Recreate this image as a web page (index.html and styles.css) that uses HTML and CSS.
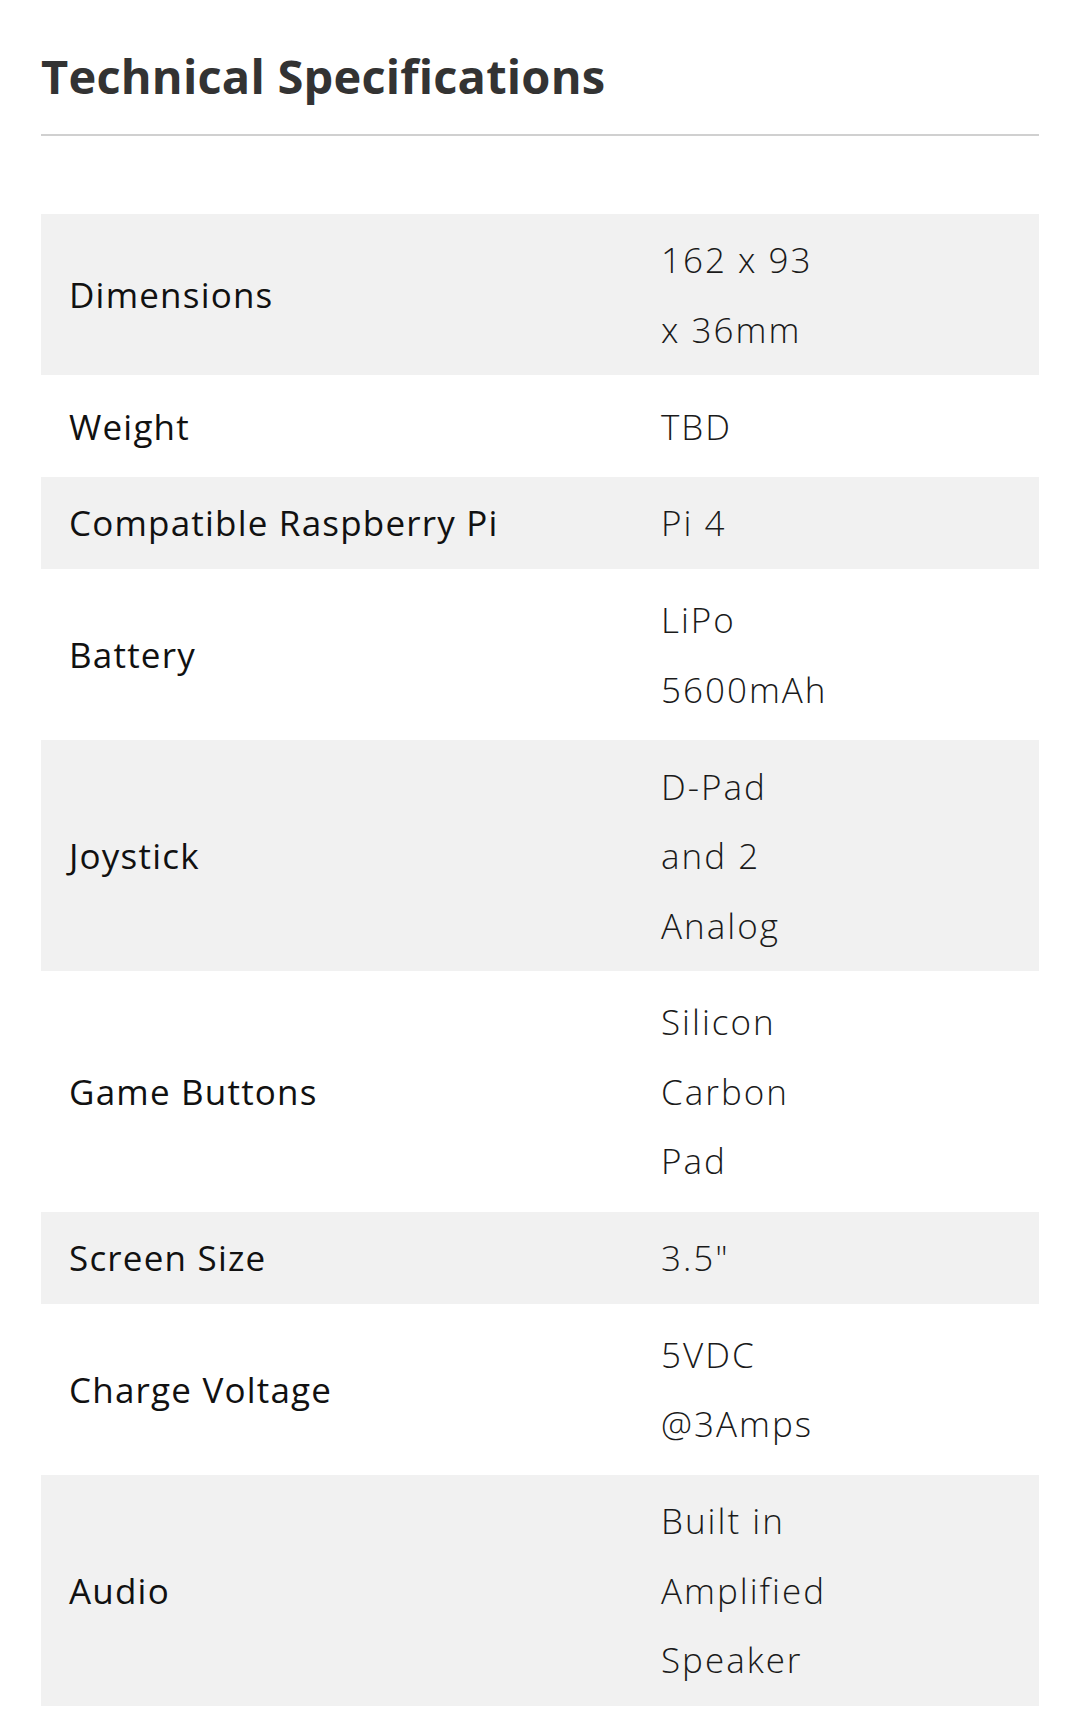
FILE: index.html
```html
<!DOCTYPE html>
<html lang="en">
<head>
<meta charset="utf-8">
<title>Technical Specifications</title>
<link rel="stylesheet" href="styles.css">
</head>
<body>
<section class="specs">
  <h2 class="specs-title">Technical Specifications</h2>
  <table class="spec-table">
    <tbody>
      <tr class="row-shaded"><th>Dimensions</th><td>162 x 93<br>x 36mm</td></tr>
      <tr><th>Weight</th><td>TBD</td></tr>
      <tr class="row-shaded"><th>Compatible Raspberry Pi</th><td>Pi 4</td></tr>
      <tr><th>Battery</th><td>LiPo<br>5600mAh</td></tr>
      <tr class="row-shaded"><th>Joystick</th><td>D-Pad<br>and 2<br>Analog</td></tr>
      <tr><th>Game Buttons</th><td>Silicon<br>Carbon<br>Pad</td></tr>
      <tr class="row-shaded"><th>Screen Size</th><td>3.5"</td></tr>
      <tr><th>Charge Voltage</th><td>5VDC<br>@3Amps</td></tr>
      <tr class="row-shaded"><th>Audio</th><td>Built in<br>Amplified<br>Speaker</td></tr>
    </tbody>
  </table>
</section>
</body>
</html>
```
FILE: styles.css
```css
html, body {
  margin: 0;
  padding: 0;
  background: #ffffff;
}

body {
  font-family: "Open Sans", "Noto Sans", "DejaVu Sans", sans-serif;
  color: #111111;
}

.specs {
  padding: 0 41px;
}

.specs-title {
  margin: 0;
  padding-top: 44px;
  padding-bottom: 26px;
  font-size: 47px;
  line-height: 64px;
  font-weight: 700;
  color: #333333;
  letter-spacing: 0.2px;
  border-bottom: 2px solid #d0d0d0;
}

.spec-table {
  width: 100%;
  margin-top: 73px;
  border-collapse: separate;
  border-spacing: 0 5.5px;
  font-size: 35px;
  line-height: 69.4px;
}

.spec-table th,
.spec-table td {
  padding: 11.25px 0 11.25px 28px;
  vertical-align: middle;
  text-align: left;
}

.spec-table th {
  width: 564px;
  font-weight: 400;
  color: #111111;
  letter-spacing: 1.2px;
}

.spec-table td {
  font-weight: 300;
  color: #1a1a1a;
  letter-spacing: 2px;
}

.row-shaded {
  background: #f1f1f1;
}
```
